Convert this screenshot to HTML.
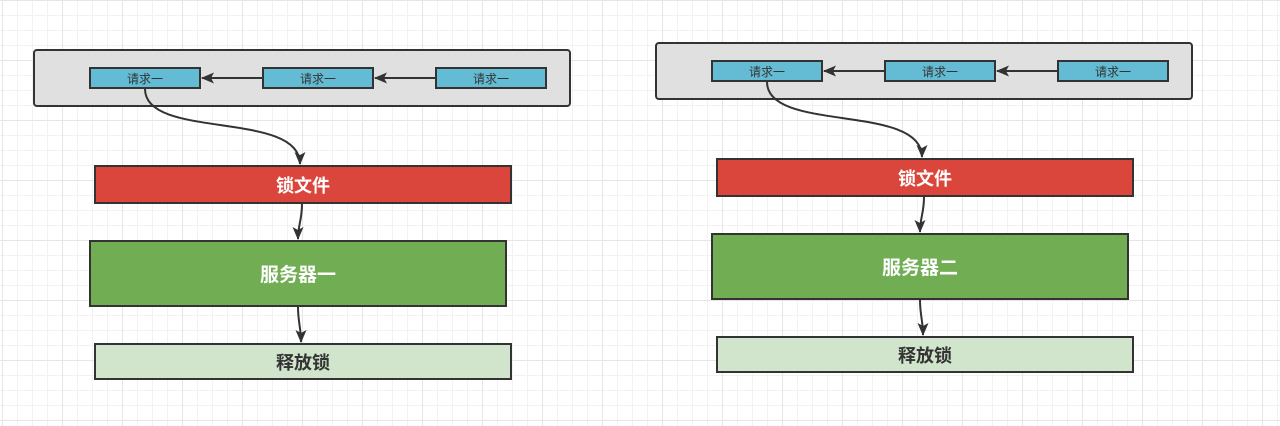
<!DOCTYPE html><html><head><meta charset="utf-8"><style>
body{margin:0;width:1280px;height:426px;overflow:hidden;position:relative;background:#fff;
background-image:linear-gradient(#e6e6e6 1px,transparent 1px),linear-gradient(90deg,#e6e6e6 1px,transparent 1px),linear-gradient(#f2f2f2 1px,transparent 1px),linear-gradient(90deg,#f2f2f2 1px,transparent 1px);
background-size:60px 60px,60px 60px,15px 15px,15px 15px;background-position:2px 0,2px 0,2px 0,2px 0;
font-family:"Liberation Sans","Noto Sans CJK SC",sans-serif}
.b{position:absolute;box-sizing:border-box;border:2px solid #333;display:flex;align-items:center;justify-content:center}
.c{background:#e0e0e0;border-radius:4px}
.q{background:#64bcd4;font-size:12px;color:#333}
.r{background:#db463c;color:#fff;font-size:18px;font-weight:bold}
.g{background:#70ad53;color:#fff;font-size:19px;font-weight:bold}
.l{background:#d0e5cb;color:#333;font-size:18px;font-weight:bold}
svg{position:absolute;left:0;top:0}
</style></head><body>
<div class="b c" style="left:33px;top:49px;width:538px;height:58px"></div>
<div class="b q" style="left:89px;top:67px;width:112px;height:22px">请求一</div>
<div class="b q" style="left:262px;top:67px;width:112px;height:22px">请求一</div>
<div class="b q" style="left:435px;top:67px;width:112px;height:22px">请求一</div>
<div class="b r" style="left:94px;top:165px;width:418px;height:39px">锁文件</div>
<div class="b g" style="left:89px;top:240px;width:418px;height:67px">服务器一</div>
<div class="b l" style="left:94px;top:343px;width:418px;height:37px">释放锁</div>

<div class="b c" style="left:655px;top:42px;width:538px;height:58px"></div>
<div class="b q" style="left:711px;top:60px;width:112px;height:22px">请求一</div>
<div class="b q" style="left:884px;top:60px;width:112px;height:22px">请求一</div>
<div class="b q" style="left:1057px;top:60px;width:112px;height:22px">请求一</div>
<div class="b r" style="left:716px;top:158px;width:418px;height:39px">锁文件</div>
<div class="b g" style="left:711px;top:233px;width:418px;height:67px">服务器二</div>
<div class="b l" style="left:716px;top:336px;width:418px;height:37px">释放锁</div>

<svg width="1280" height="426"><defs><marker id="a" markerWidth="13" markerHeight="11" refX="12" refY="5.5" orient="auto" markerUnits="userSpaceOnUse"><path d="M0,0 L13,5.5 L0,11 L3,5.5z" fill="#333"/></marker></defs>
<g fill="none" stroke="#333" stroke-width="2" marker-end="url(#a)">
<path d="M262 78 H202"/><path d="M435 78 H375"/>
<path d="M145 89 C145 140 300 110 300 164"/>
<path d="M302 204 C302 220 298 225 298 239"/>
<path d="M298 307 C298 322 301 328 301 342"/>
<g transform="translate(622,-7)">
<path d="M262 78 H202"/><path d="M435 78 H375"/>
<path d="M145 89 C145 140 300 110 300 164"/>
<path d="M302 204 C302 220 298 225 298 239"/>
<path d="M298 307 C298 322 301 328 301 342"/>
</g></g></svg>
</body></html>
